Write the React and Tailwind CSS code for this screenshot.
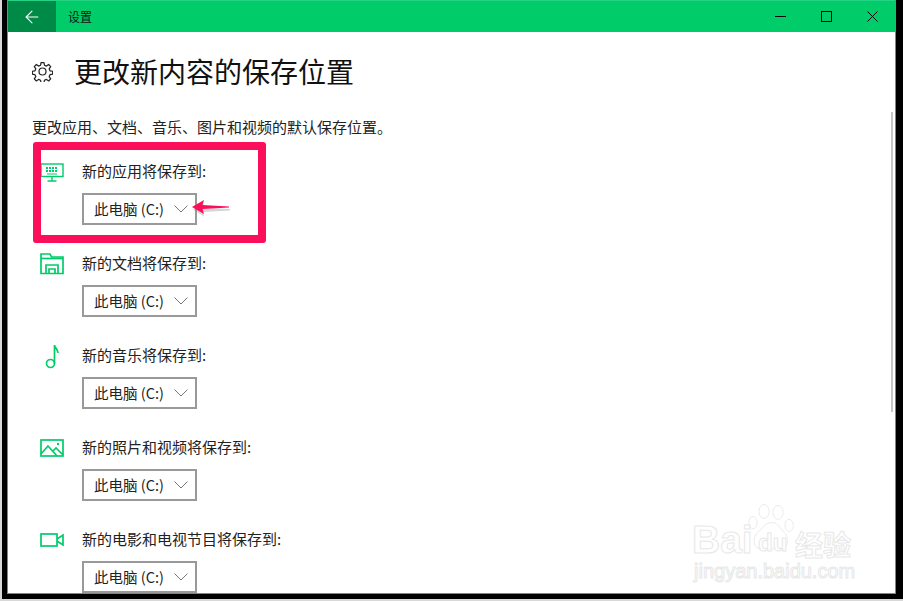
import { ArrowLeft } from "lucide-react";

const font = "font-['Noto_Sans_CJK_SC','Liberation_Sans',sans-serif]";

const KeyboardIcon = () => (
  <svg width="24" height="19" viewBox="0 0 24 19" fill="none" stroke="#00cc6a" strokeWidth="1.4">
    <rect x="1" y="1" width="22" height="12.500" />
    <path d="M12 14v3.500M7.500 18h9" />
    <path d="M6 5h12M6 8h12" strokeWidth="2" strokeDasharray="2 1" />
    <path d="M7 11h10" strokeWidth="1" />
  </svg>
);

const FolderIcon = () => (
  <svg width="24" height="22" viewBox="0 0 24 22" fill="none" stroke="#00cc6a" strokeWidth="1.7">
    <path d="M1 20.500V1h9l1.500 3H23v16.500z" />
    <path d="M1 5.500h22" />
    <path d="M6 20.500v-8.500h12v8.500M9 20.500v-4.500h6v4.500" />
  </svg>
);

const NoteIcon = () => (
  <svg width="14" height="25" viewBox="0 0 14 25" fill="none" stroke="#00cc6a" strokeWidth="1.7">
    <circle cx="5.500" cy="19.500" r="4" />
    <path d="M9.500 19.500V1c0 3 3.500 4 3.500 8" />
  </svg>
);

const PictureIcon = () => (
  <svg width="24" height="18" viewBox="0 0 24 18" fill="none" stroke="#00cc6a" strokeWidth="1.7">
    <rect x="1" y="1" width="22" height="16" />
    <path d="M1 15l7-8 9 10M13 12l3-3 7 7" />
    <rect x="17" y="4" width="2" height="2" fill="#00cc6a" stroke="none" />
  </svg>
);

const VideoIcon = () => (
  <svg width="24" height="14" viewBox="0 0 24 14" fill="none" stroke="#00cc6a" strokeWidth="1.7">
    <rect x="1" y="1" width="16" height="12" />
    <path d="M17 6l6-4v10l-6-4" />
  </svg>
);

const GearIcon = () => (
  <svg width="21" height="21" viewBox="0 0 24 24" fill="none" stroke="#222" strokeWidth="1.4" strokeLinejoin="round">
    <path d="M10.300 1.800h3.400l.5 3 2.300 1 2.500-1.800 2.400 2.400-1.800 2.500 1 2.300 3 .5v3.400l-3 .5-1 2.300 1.800 2.500-2.400 2.400-2.500-1.800-2.300 1-.5 3h-3.400l-.5-3-2.300-1-2.500 1.800-2.400-2.400 1.800-2.500-1-2.300-3-.5v-3.400l3-.5 1-2.300-1.800-2.500 2.400-2.400 2.500 1.800 2.300-1z" />
    <circle cx="12" cy="12" r="4" />
  </svg>
);

const Chevron = () => (
  <svg width="14" height="8" viewBox="0 0 14 8" fill="none" stroke="#777" strokeWidth="1">
    <path d="M0.500 0.500l6.500 6.500 6.500-6.500" />
  </svg>
);

const Dropdown = () => (
  <div className="flex h-[32px] w-[115px] items-center justify-between border-2 border-[#999] pl-[10px] pr-[7px] text-[14.5px] text-[#222]">
    <span>此电脑 (C:)</span>
    <Chevron />
  </div>
);

const folders = [
  { label: "新的应用将保存到:", icon: <KeyboardIcon /> },
  { label: "新的文档将保存到:", icon: <FolderIcon /> },
  { label: "新的音乐将保存到:", icon: <NoteIcon /> },
  { label: "新的照片和视频将保存到:", icon: <PictureIcon /> },
  { label: "新的电影和电视节目将保存到:", icon: <VideoIcon /> },
];

const Row = ({ label, icon }) => (
  <div className="flex h-[92px] shrink-0">
    <div className="flex h-[26px] w-[50px] items-center justify-center pr-[10px]">{icon}</div>
    <div>
      <div className="mb-[10px] h-[24px] text-[15px] leading-[24px] text-[#222]">{label}</div>
      <Dropdown />
    </div>
  </div>
);

const Watermark = () => (
  <div className="absolute left-[684px] top-[504px] h-[78px] w-[164px] font-['Liberation_Sans',sans-serif] text-white [-webkit-text-stroke:1px_#e8e8e8]">
    <span className="absolute left-0 top-[14px] text-[39px] font-bold leading-[44px]">Bai</span>
    <svg className="absolute left-[56px] top-0" width="47" height="52" viewBox="0 0 50 56" fill="none" stroke="#e8e8e8" strokeWidth="1">
      <ellipse cx="5" cy="20" rx="4.500" ry="6.500" />
      <ellipse cx="17" cy="8" rx="5.500" ry="7.500" />
      <ellipse cx="32" cy="9" rx="5.500" ry="7.500" />
      <ellipse cx="44" cy="23" rx="4.500" ry="6.500" />
      <path d="M25 20c7 0 9 6 14 11 5 5 5 18-6 18-4 0-6-1-9-1s-5 1-9 1C5 49 4 36 10 31c5-4 8-11 15-11z" />
    </svg>
    <span className="absolute left-[66px] top-[27px] text-[24px] font-bold leading-[24px]">du</span>
    <span className="absolute left-[103px] top-[26px] font-['Noto_Sans_CJK_SC',sans-serif] text-[28px] font-bold leading-[28px]">经验</span>
    <span className="absolute left-[2px] top-[55px] text-[20px] leading-[24px]">jingyan.baidu.com</span>
  </div>
);

export default function App() {
  return (
    <div className={`h-[601px] w-[903px] overflow-hidden border-b-2 border-l-2 border-[#d8d8d8] bg-black pb-[5px] pl-[5px] pr-[7px] ${font}`}>
      <div className="relative flex h-full flex-col overflow-hidden border-x border-b border-[#00cc6a] bg-white">
        <div className="flex h-[32px] shrink-0 items-stretch border-t border-[#22d484] bg-[#00cc6a]">
          <div className="flex w-[48px] items-center justify-center bg-[#008a48]">
            <ArrowLeft size={20} strokeWidth={1.3} className="text-white" />
          </div>
          <span className="ml-[12px] self-center text-[12px] text-[#111]">设置</span>
          <div className="ml-auto flex items-center text-black">
            <div className="flex w-[46px] justify-center">
              <svg width="11" height="11" viewBox="0 0 11 11" fill="none" stroke="currentColor" shapeRendering="crispEdges">
                <path d="M0 5.500h11" />
              </svg>
            </div>
            <div className="flex w-[46px] justify-center">
              <svg width="11" height="11" viewBox="0 0 11 11" fill="none" stroke="currentColor" shapeRendering="crispEdges">
                <rect x="0.500" y="0.500" width="10" height="10" />
              </svg>
            </div>
            <div className="flex w-[46px] justify-center">
              <svg width="11" height="11" viewBox="0 0 11 11" fill="none" stroke="currentColor">
                <path d="M0.500 0.500l10 10M10.500 0.500l-10 10" />
              </svg>
            </div>
          </div>
        </div>
        <div className="flex-1 overflow-hidden pl-[24px]">
          <div className="mt-[19px] flex h-[40px] items-center">
            <GearIcon />
            <h1 className="ml-[21px] text-[28px] leading-[40px] text-[#111]">更改新内容的保存位置</h1>
          </div>
          <p className="mt-[24px] text-[15px] leading-[24px] text-[#222]">更改应用、文档、音乐、图片和视频的默认保存位置。</p>
          <div className="mt-[20px]">
            {folders.map((folder) => (
              <Row key={folder.label} {...folder} />
            ))}
          </div>
        </div>
        <div className="absolute right-[2px] top-[112px] h-[300px] w-[2px] bg-[#c8c4c4]" />
        <div className="absolute left-[25px] top-[142px] h-[101px] w-[233px] rounded-[3px] border-[8px] border-[#fb0f5a]" />
        <svg className="absolute left-[184px] top-[198px]" width="40" height="20" viewBox="0 0 40 20">
          <path d="M1 9L12 2.500 11 7.500 38 8.500 38 10 11 11.500 12 16z" fill="#888" opacity="0.35" transform="translate(0 2.500)" />
          <path d="M0 9L12 2 10.500 7 37 8.500 37 9.500 10.500 11 12 16z" fill="#fb0f5a" />
        </svg>
        <Watermark />
      </div>
    </div>
  );
}
